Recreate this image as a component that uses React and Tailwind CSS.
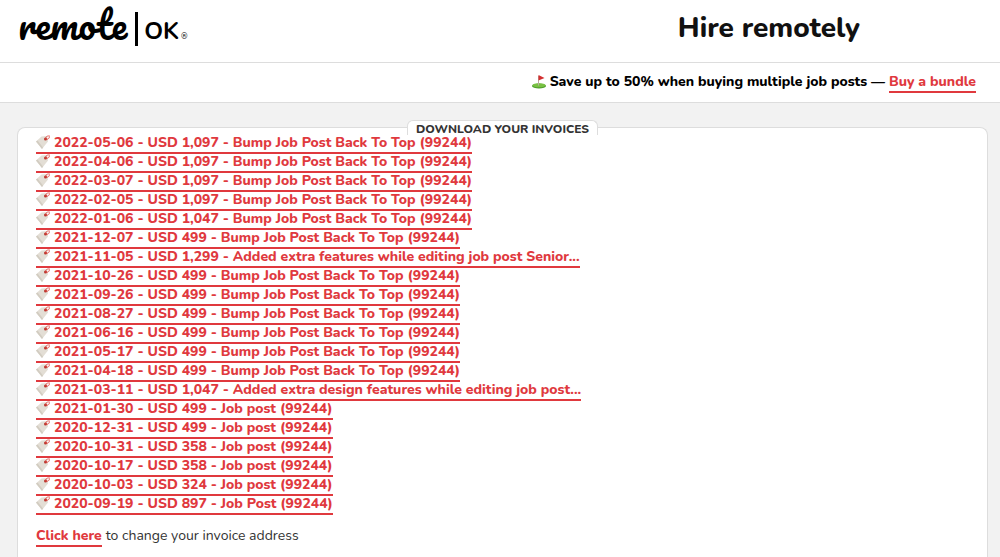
const invoices = [
  { date: '2022-05-06', amount: '1,097', label: 'Bump Job Post Back To Top (99244)' },
  { date: '2022-04-06', amount: '1,097', label: 'Bump Job Post Back To Top (99244)' },
  { date: '2022-03-07', amount: '1,097', label: 'Bump Job Post Back To Top (99244)' },
  { date: '2022-02-05', amount: '1,097', label: 'Bump Job Post Back To Top (99244)' },
  { date: '2022-01-06', amount: '1,047', label: 'Bump Job Post Back To Top (99244)' },
  { date: '2021-12-07', amount: '499', label: 'Bump Job Post Back To Top (99244)' },
  { date: '2021-11-05', amount: '1,299', label: 'Added extra features while editing job post Senior...' },
  { date: '2021-10-26', amount: '499', label: 'Bump Job Post Back To Top (99244)' },
  { date: '2021-09-26', amount: '499', label: 'Bump Job Post Back To Top (99244)' },
  { date: '2021-08-27', amount: '499', label: 'Bump Job Post Back To Top (99244)' },
  { date: '2021-06-16', amount: '499', label: 'Bump Job Post Back To Top (99244)' },
  { date: '2021-05-17', amount: '499', label: 'Bump Job Post Back To Top (99244)' },
  { date: '2021-04-18', amount: '499', label: 'Bump Job Post Back To Top (99244)' },
  { date: '2021-03-11', amount: '1,047', label: 'Added extra design features while editing job post...' },
  { date: '2021-01-30', amount: '499', label: 'Job post (99244)' },
  { date: '2020-12-31', amount: '499', label: 'Job post (99244)' },
  { date: '2020-10-31', amount: '358', label: 'Job post (99244)' },
  { date: '2020-10-17', amount: '358', label: 'Job post (99244)' },
  { date: '2020-10-03', amount: '324', label: 'Job post (99244)' },
  { date: '2020-09-19', amount: '897', label: 'Job Post (99244)' },
]

function TagIcon() {
  return (
    <svg viewBox="0 0 28 28" className="w-3.5 h-3.5 shrink-0" aria-hidden="true">
      <path d="M0 13 11 3l11-1 2 11-12 15z" fill="#e3ded5" />
      <path d="m0 13 12 15 2-3L3 11z" fill="#d2ccc1" />
      <circle cx="19" cy="8" r="3" fill="#b9372f" />
      <path d="M20 8c-2-4 2-7 7-6M20 8c3 2 6 0 7-4" fill="none" stroke="#e0413c" strokeWidth="1.600" strokeLinecap="round" />
    </svg>
  )
}

function GolfIcon() {
  return (
    <svg viewBox="0 0 28 28" className="w-3.5 h-3.5 shrink-0" aria-hidden="true">
      <ellipse cx="14" cy="22" rx="14" ry="5" fill="#4f9e2b" />
      <ellipse cx="14" cy="20.500" rx="13" ry="4" fill="#79c142" />
      <path d="M13 2v19" stroke="#b9aaa0" strokeWidth="2" />
      <path d="m13 0 12 6-12 5z" fill="#d32f2f" />
    </svg>
  )
}

function Logo() {
  return (
    <a href="#" aria-label="Remote OK" className="flex items-start text-black">
      <span className="text-[38px] leading-[48px] font-['Pacifico','Lobster',cursive]">remote</span>
      <span className="w-[3px] h-[34px] bg-black ml-2 mt-3" />
      <span className="text-[24px] leading-[30px] font-bold ml-1.5 mt-4">OK</span>
      <span className="text-[8px] leading-[10px] ml-0.5 mt-8">®</span>
    </a>
  )
}

export default function App() {
  return (
    <div className="min-h-screen flex flex-col bg-[#f2f2f2] text-[#333] text-[14px] font-['Nunito','Lato',sans-serif]">
      <header className="h-[63px] flex items-start justify-between pl-[18px] pr-[140px] bg-white border-b border-[#ddd]">
        <Logo />
        <h1 className="mt-2.5 text-[28px] leading-[36px] font-extrabold text-[#111]">Hire remotely</h1>
      </header>

      <div className="h-10 flex items-center justify-end pr-6 pb-0.5 bg-white border-b border-[#ddd] leading-[18px] font-extrabold text-black">
        <GolfIcon />
        <span className="ml-1">Save up to 50% when buying multiple job posts —</span>
        <a href="#" className="ml-1 pt-0.5 border-b-2 border-[#e0393e] text-[#e0393e]">Buy a bundle</a>
      </div>

      <main className="flex-1 flex flex-col pt-6 pl-[17px] pr-3">
        <section className="flex-1 px-[18px] pb-2 bg-white border border-b-0 border-[#ddd] rounded-t-lg">
          <h2 className="w-fit h-[15px] mx-auto -mt-2 px-2 bg-white border border-b-0 border-[#ddd] rounded-t-md text-[12px] leading-[16px] font-extrabold whitespace-nowrap">
            DOWNLOAD YOUR INVOICES
          </h2>
          <ul>
            {invoices.map(inv => (
              <li key={inv.date} className="flex">
                <a href="#" className="flex h-[19px] gap-1 border-b-2 border-[#e0393e] leading-[16px] font-extrabold text-[#e0393e]">
                  <TagIcon />
                  {inv.date} - USD {inv.amount} - {inv.label}
                </a>
              </li>
            ))}
          </ul>
          <p className="flex gap-1 mt-3 leading-[18px]">
            <a href="#" className="border-b-2 border-[#e0393e] font-extrabold text-[#e0393e]">Click here</a>
            to change your invoice address
          </p>
        </section>
      </main>
    </div>
  )
}
